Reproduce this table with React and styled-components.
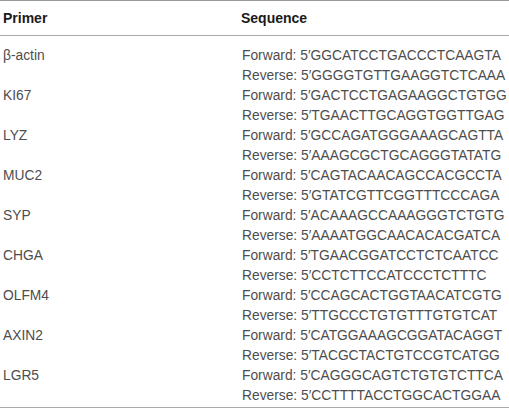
import React from 'react';
import styled, { createGlobalStyle } from 'styled-components';

const GlobalStyle = createGlobalStyle`
    body {
        margin: 0;
        background: #ffffff;
        font-family: 'Liberation Sans', Arial, sans-serif;
    }
`;

const Table = styled.div`
    width: 509px;
    border-top: 1px solid #999999;
    border-bottom: 1px solid #aaaaaa;
`;

const HeaderRow = styled.div`
    display: grid;
    grid-template-columns: 240px 1fr;
    height: 34px;
    align-items: center;
    border-bottom: 1px solid #aaaaaa;
    font-size: 14px;
    font-weight: 700;
    color: #1a1a1a;
`;

const HeaderCell = styled.div`
    padding-left: ${({ $indent }) => $indent || 3}px;
`;

const Body = styled.div`
    padding: 10px 0 1px;
`;

const Row = styled.div`
    display: grid;
    grid-template-columns: 240px 1fr;
    font-size: 13.8px;
    line-height: 20px;
    color: #4d4d4d;
`;

const Name = styled.div`
    padding-left: 3px;
`;

const Seqs = styled.div`
    padding-left: 2px;
    white-space: nowrap;
`;

const primers = [
    ['β-actin', 'GGCATCCTGACCCTCAAGTA', 'GGGGTGTTGAAGGTCTCAAA'],
    ['KI67', 'GACTCCTGAGAAGGCTGTGG', 'TGAACTTGCAGGTGGTTGAG'],
    ['LYZ', 'GCCAGATGGGAAAGCAGTTA', 'AAAGCGCTGCAGGGTATATG'],
    ['MUC2', 'CAGTACAACAGCCACGCCTA', 'GTATCGTTCGGTTTCCCAGA'],
    ['SYP', 'ACAAAGCCAAAGGGTCTGTG', 'AAAATGGCAACACACGATCA'],
    ['CHGA', 'TGAACGGATCCTCTCAATCC', 'CCTCTTCCATCCCTCTTTC'],
    ['OLFM4', 'CCAGCACTGGTAACATCGTG', 'TTGCCCTGTGTTTGTGTCAT'],
    ['AXIN2', 'CATGGAAAGCGGATACAGGT', 'TACGCTACTGTCCGTCATGG'],
    ['LGR5', 'CAGGGCAGTCTGTGTCTTCA', 'CCTTTTACCTGGCACTGGAA'],
];

const App = () => (
    <>
        <GlobalStyle />
        <Table>
            <HeaderRow>
                <HeaderCell>Primer</HeaderCell>
                <HeaderCell $indent={1}>Sequence</HeaderCell>
            </HeaderRow>
            <Body>
                {primers.map(([name, fwd, rev]) => (
                    <Row key={name}>
                        <Name>{name}</Name>
                        <Seqs>
                            <div>Forward: 5′{fwd}</div>
                            <div>Reverse: 5′{rev}</div>
                        </Seqs>
                    </Row>
                ))}
            </Body>
        </Table>
    </>
);

export default App;
